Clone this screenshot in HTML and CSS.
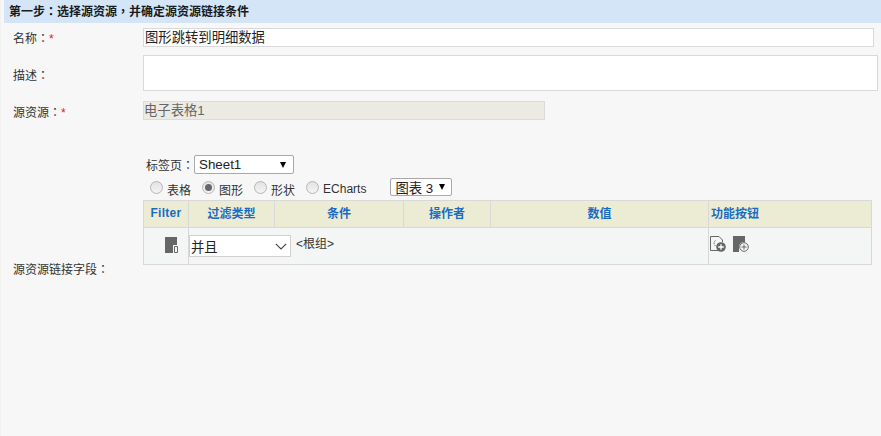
FILE: index.html
```html
<!DOCTYPE html>
<html>
<head>
<meta charset="utf-8">
<title>第一步</title>
<link rel="stylesheet" href="styles.css">
</head>
<body>
<div class="page">
  <h1 class="step-title">第一步<span class="p">：</span>选择源资源<span class="p">，</span>并确定源资源链接条件</h1>
  <div class="form">
    <div class="row row-name">
      <div class="label">名称<span class="p">：</span><span class="req">*</span></div>
      <div class="field input name-input">图形跳转到明细数据</div>
    </div>
    <div class="row row-desc">
      <div class="label">描述<span class="p">：</span></div>
      <div class="field input desc-input"></div>
    </div>
    <div class="row row-source">
      <div class="label">源资源<span class="p">：</span><span class="req">*</span></div>
      <div class="field disabled-input">电子表格1</div>
    </div>
    <div class="row row-link">
      <div class="label link-label">源资源链接字段<span class="p">：</span></div>
      <div class="link-body">
        <div class="tab-line">
          <span>标签页<span class="p">：</span></span>
          <div class="dropdown sheet-select"><span>Sheet1</span><i class="tri"></i></div>
        </div>
        <div class="radio-line">
          <span class="radio-item"><i class="radio"></i>表格</span>
          <span class="radio-item"><i class="radio on"></i>图形</span>
          <span class="radio-item"><i class="radio"></i>形状</span>
          <span class="radio-item"><i class="radio"></i>ECharts</span>
          <div class="dropdown chart-select"><span>图表 3</span><i class="tri"></i></div>
        </div>
        <div class="grid">
          <div class="th th-filter">Filter</div>
          <div class="th">过滤类型</div>
          <div class="th">条件</div>
          <div class="th">操作者</div>
          <div class="th">数值</div>
          <div class="th th-left">功能按钮</div>
          <div class="td td-icon">
            <svg width="13" height="16" viewBox="0 0 13 16"><path d="M0 0H12V8H8V16H0Z" fill="#666"/><path d="M9.500 9.500H12.500V15.500H9.500Z" fill="none" stroke="#666"/></svg>
          </div>
          <div class="td td-combo">
            <div class="combo"><span>并且</span>
              <svg width="12" height="7" viewBox="0 0 12 7"><path d="M.8.8 6 6 11.2.8" fill="none" stroke="#444" stroke-width="1.1"/></svg>
            </div>
            <span class="root">&lt;根组&gt;</span>
          </div>
          <div class="td td-actions">
            <svg width="16" height="16" viewBox="0 0 16 16"><path d="M9 14.500H.5V.5H9L12.500 4V6" fill="none" stroke="#666"/><path d="M5.500 4.500C3.500 6 3.500 8 5.500 10" fill="none" stroke="#666" stroke-dasharray="1.5 1"/><circle cx="11" cy="11" r="4.800" fill="#666"/><path d="M8.200 11H13.800M11 8.200V13.800" stroke="#fff" stroke-width="1.300"/></svg>
            <svg width="16" height="16" viewBox="0 0 16 16"><path d="M0 0H12V6.200A5 5 0 0 0 6 11.500V16H0Z" fill="#666"/><circle cx="11" cy="11" r="4.300" fill="none" stroke="#666"/><path d="M8.500 11H13.500M11 8.500V13.500" stroke="#666"/></svg>
          </div>
        </div>
      </div>
    </div>
  </div>
</div>
</body>
</html>
```
FILE: styles.css
```css
* { box-sizing: border-box; }
html, body { margin: 0; height: 100%; }
body {
  background: #f7f7f7;
  font-family: "Liberation Sans", "Noto Sans CJK SC", sans-serif;
  font-size: 12px;
  color: #333;
  overflow: hidden;
}
.p { font-family: "Noto Sans CJK TC", sans-serif; }
.page { height: 436px; padding-left: 3px; border-left: 1px solid #f2f2f0; }
.step-title {
  margin: 0;
  height: 23px;
  padding-left: 5px;
  background: #d3e5f6;
  color: #1a1a1a;
  font-size: 12px;
  font-weight: 700;
  line-height: 21px;
}
.form { display: flex; flex-direction: column; padding-top: 5px; }
.row { display: flex; }
.label { width: 139px; padding-left: 9px; flex: none; }
.req { color: #e0143c; }
.field { flex: none; }
.input { background: #fff; border: 1px solid #d9d9d9; }
.row-name { height: 19px; }
.row-name .label { line-height: 20px; }
.name-input { width: 731px; height: 19px; font-size: 13.333px; line-height: 17px; color: #222; padding-left: 1px; }
.row-desc { margin-top: 8px; height: 36px; align-items: flex-start; }
.row-desc .label { line-height: 39px; }
.desc-input { width: 735px; height: 36px; }
.row-source { margin-top: 10px; height: 19px; }
.row-source .label { line-height: 22px; }
.disabled-input {
  width: 402px;
  height: 19px;
  background: #ebebe4;
  border: 1px solid #dcdcd6;
  color: #666;
  font-size: 13.333px;
  line-height: 17px;
}
.row-link { margin-top: 35px; }
.link-label { align-self: flex-end; line-height: 16px; margin-bottom: -13px; }
.link-body { width: 729px; flex: none; }
.tab-line { display: flex; align-items: center; height: 19px; padding-left: 3px; }
.dropdown {
  display: flex;
  align-items: center;
  background: #fff;
  border: 1px solid #a9a9a9;
  border-radius: 2px;
  color: #222;
}
.sheet-select { width: 100px; height: 19px; padding: 0 7px 0 4px; font-size: 13.333px; }
.chart-select { width: 62px; height: 18px; padding: 0 6px 0 4px; font-size: 13.333px; margin-left: 13px; margin-top: -4px; }
.tri {
  margin-left: auto;
  width: 0;
  height: 0;
  border-left: 3.500px solid transparent;
  border-right: 3.500px solid transparent;
  border-top: 6px solid #000;
}
.radio-line { display: flex; align-items: center; height: 18px; margin-top: 6px; padding-left: 7px; gap: 11px; }
.radio-item { display: flex; align-items: center; gap: 4px; color: #333; }
.radio {
  width: 13px;
  height: 13px;
  border-radius: 50%;
  border: 1px solid #b5b5b5;
  background: linear-gradient(#e2e2e2, #f4f4f4);
  margin-top: -3px;
  display: flex;
  align-items: center;
  justify-content: center;
}
.radio.on::after { content: ""; width: 7px; height: 7px; border-radius: 50%; background: #666; }
.grid {
  display: grid;
  grid-template-columns: 45px 86px 129px 87px 218px 163px;
  grid-template-rows: 27px 37px;
  width: 729px;
  margin-top: 2px;
  border-top: 1px solid #d8d8d8;
  border-left: 1px solid #d8d8d8;
}
.th, .td { border-right: 1px solid #d8d8d8; border-bottom: 1px solid #d8d8d8; }
.th {
  background: #ecebd3;
  color: #1a6bc4;
  font-weight: 700;
  display: flex;
  align-items: center;
  justify-content: center;
  padding-bottom: 3px;
}
.th-filter { letter-spacing: .3px; }
.th-left { justify-content: flex-start; padding-left: 2px; }
.td { background: #f4f6f5; }
.td-icon { display: flex; justify-content: center; align-items: center; padding: 0 0 3px 10px; }
.td-combo { grid-column: span 4; display: flex; align-items: flex-start; padding-top: 7px; }
.combo {
  flex: none;
  width: 102px;
  height: 22px;
  background: #fff;
  border: 1px solid #d0d0d0;
  display: flex;
  align-items: center;
  justify-content: space-between;
  padding: 0 3px 0 1px;
  font-size: 13.333px;
  color: #222;
}
.root { margin-left: 5px; line-height: 19px; color: #333; }
.td-actions { display: flex; align-items: center; gap: 7px; padding: 0 0 4px 1px; }
```
